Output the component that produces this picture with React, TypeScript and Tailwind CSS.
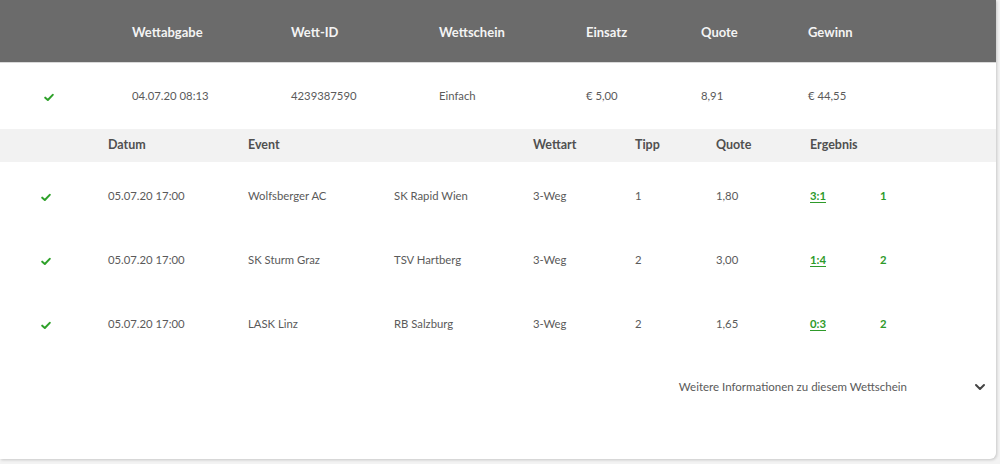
import { ChevronDown } from 'lucide-react';

const BET = {
  placed: '04.07.20 08:13',
  id: '4239387590',
  type: 'Einfach',
  stake: '€ 5,00',
  odds: '8,91',
  win: '€ 44,55',
};

const PICKS = [
  { date: '05.07.20 17:00', home: 'Wolfsberger AC', away: 'SK Rapid Wien', market: '3-Weg', tip: '1', odds: '1,80', score: '3:1', outcome: '1' },
  { date: '05.07.20 17:00', home: 'SK Sturm Graz', away: 'TSV Hartberg', market: '3-Weg', tip: '2', odds: '3,00', score: '1:4', outcome: '2' },
  { date: '05.07.20 17:00', home: 'LASK Linz', away: 'RB Salzburg', market: '3-Weg', tip: '2', odds: '1,65', score: '0:3', outcome: '2' },
];

const Check = ({ className = '' }: { className?: string }) => (
  <svg viewBox="0 0 12 10" className={`w-[10px] h-[9px] ${className}`}>
    <path d="M1.5 5.2 L4.6 8 L10.5 1.8" fill="none" stroke="#2ea12a" strokeWidth="2.4" strokeLinecap="round" strokeLinejoin="round" />
  </svg>
);

const mainCols = 'grid grid-cols-[132px_159px_148px_147px_115px_107px_1fr] items-center';
const subCols = 'grid grid-cols-[108px_140px_146px_139px_102px_81px_94px_70px_1fr] items-center';

export default function App() {
  return (
    <div className="w-[1000px] h-[464px] bg-[#f3f3f3] font-['Lato',sans-serif] text-[#5a5a5a]">
      <div className="w-[996px] h-[459px] bg-white rounded-br-[6px] shadow-[1px_1px_3px_rgba(0,0,0,0.18)] overflow-hidden">
        {/* Kopfzeile */}
        <div className={`${mainCols} h-[63px] pt-[3px] bg-[#6b6b6b] text-[#f4f4f4] text-[13px] font-bold border-b border-[#d9d9d9]`}>
          <div />
          <div>Wettabgabe</div>
          <div>Wett-ID</div>
          <div>Wettschein</div>
          <div>Einsatz</div>
          <div>Quote</div>
          <div>Gewinn</div>
        </div>

        {/* Wettschein */}
        <div className={`${mainCols} h-[66px] text-[11.3px]`}>
          <div className="pl-[44px] pt-[2px]">
            <Check />
          </div>
          <div>{BET.placed}</div>
          <div>{BET.id}</div>
          <div>{BET.type}</div>
          <div>{BET.stake}</div>
          <div>{BET.odds}</div>
          <div>{BET.win}</div>
        </div>

        {/* Tipps */}
        <div className={`${subCols} h-[33px] bg-[#f2f2f2] text-[12.5px] font-bold text-[#505050]`}>
          <div />
          <div>Datum</div>
          <div>Event</div>
          <div />
          <div>Wettart</div>
          <div>Tipp</div>
          <div>Quote</div>
          <div>Ergebnis</div>
          <div />
        </div>

        {PICKS.map((p, i) => (
          <div key={i} className={`${subCols} h-[64px] pt-[4px] text-[11.3px]`}>
            <div className="pl-[41px] pt-[2px]">
              <Check />
            </div>
            <div>{p.date}</div>
            <div>{p.home}</div>
            <div>{p.away}</div>
            <div>{p.market}</div>
            <div>{p.tip}</div>
            <div>{p.odds}</div>
            <div>
              <span className="text-[#2e9a2a] font-bold underline underline-offset-2">{p.score}</span>
            </div>
            <div className="text-[#2e9a2a] font-bold">{p.outcome}</div>
          </div>
        ))}

        {/* Weitere Infos */}
        <div className="flex items-center justify-end h-[63px] pt-[2px] pr-[8px] text-[11.5px]">
          <span className="mr-[65px]">Weitere Informationen zu diesem Wettschein</span>
          <ChevronDown className="w-[16px] h-[16px] text-[#444]" strokeWidth={3} />
        </div>
      </div>
    </div>
  );
}
